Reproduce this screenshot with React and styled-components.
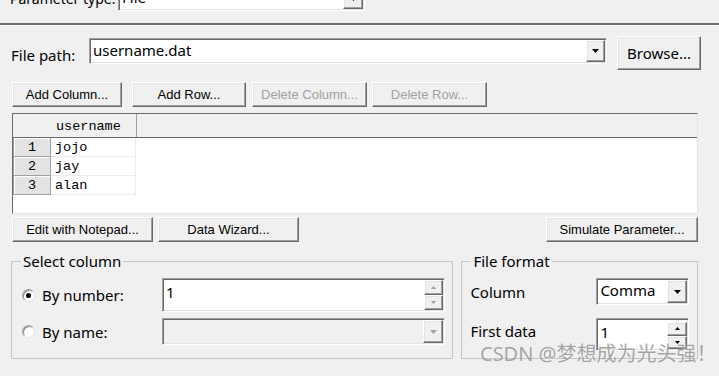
import React from 'react'
import styled, { createGlobalStyle, css } from 'styled-components'

const UI = `"Noto Sans", "Liberation Sans", sans-serif`
const SMALL = `"Liberation Sans", Arial, sans-serif`
const MONO = `"Liberation Mono", "DejaVu Sans Mono", monospace`

const GlobalStyle = createGlobalStyle`
  html, body {
    margin: 0;
    padding: 0;
    background: #f0f0f0;
  }
  body {
    font-family: ${UI};
    color: #000;
  }
`

const raised = css`
  box-sizing: border-box;
  background: #f0f0f0;
  border: 1px solid;
  border-color: #fff #696969 #696969 #fff;
  box-shadow: inset -1px -1px #a0a0a0, inset 1px 1px #e3e3e3;
`

const sunken = css`
  box-sizing: border-box;
  border: 1px solid;
  border-color: #a0a0a0 #fff #fff #a0a0a0;
  box-shadow: inset 1px 1px #696969, inset -1px -1px #e3e3e3;
`

const Page = styled.div`
  position: relative;
  width: 719px;
  height: 376px;
  overflow: hidden;
  background: #f0f0f0;
`

const TopStrip = styled.div`
  height: 22px;
  overflow: hidden;
`

const TopRow = styled.div`
  display: flex;
  align-items: center;
  height: 25px;
  margin-top: -14px;
  padding-left: 10px;
`

const Separator = styled.div`
  height: 2px;
  background: #6f6f6f;
  border-top: 1px solid #f0f0f0;
  border-bottom: 1px solid #fff;
`

const Body = styled.div`
  padding: 10px 21px 0 12px;
`

const Row = styled.div`
  display: flex;
  align-items: ${(p) => p.$align || 'center'};
  margin-top: ${(p) => p.$mt || 0}px;
`

const Label = styled.span`
  flex-shrink: 0;
  width: ${(p) => (p.$w ? `${p.$w}px` : 'auto')};
  margin-top: ${(p) => p.$mt || 0}px;
  margin-bottom: ${(p) => p.$mb || 0}px;
  font-family: ${UI};
  font-size: ${(p) => p.$size || 15}px;
  line-height: 20px;
  white-space: nowrap;
`

const Button = styled.button`
  ${raised};
  flex-shrink: 0;
  width: ${(p) => p.$w}px;
  height: ${(p) => p.$h || 25}px;
  margin: 0 0 0 ${(p) => p.$ml || 0}px;
  padding: 0;
  font-family: ${(p) => (p.$big ? UI : SMALL)};
  font-size: ${(p) => (p.$big ? 15 : 13)}px;
  color: ${(p) => (p.disabled ? '#a0a0a0' : '#000')};
  outline: none;
  appearance: none;
`

const Combo = styled.div`
  ${sunken};
  display: flex;
  flex-shrink: 0;
  width: ${(p) => p.$w}px;
  height: ${(p) => p.$h}px;
  margin-top: ${(p) => p.$mt || 0}px;
  padding: 1px;
  background: ${(p) => (p.$disabled ? '#f0f0f0' : '#fff')};
`

const ComboText = styled.span`
  flex: 1;
  padding: ${(p) => p.$pt || 0}px 0 0 2px;
  font-family: ${UI};
  font-size: 15px;
  line-height: 19px;
  overflow: hidden;
  white-space: nowrap;
`

const DropButton = styled.div`
  ${raised};
  width: ${(p) => p.$w || 19}px;
  display: flex;
  align-items: center;
  justify-content: center;
`

const SpinButtons = styled.div`
  display: flex;
  flex-direction: column;
  width: ${(p) => p.$w || 19}px;
  margin-top: ${(p) => p.$mt || 0}px;
`

const SpinButton = styled.div`
  ${raised};
  flex: 1;
  display: flex;
  align-items: center;
  justify-content: center;
`

const Grid = styled.div`
  box-sizing: border-box;
  height: 101px;
  margin-top: 6px;
  background: #fff;
  border: 1px solid;
  border-color: #696969 #e3e3e3 #e3e3e3 #696969;
`

const HeadRow = styled.div`
  display: flex;
  height: 23px;
  background: #f0f0f0;
  border-bottom: 1px solid #696969;
`

const HeadCell = styled.div`
  box-sizing: border-box;
  width: ${(p) => p.$w}px;
  padding-left: 5px;
  font-family: ${MONO};
  font-size: 13.5px;
  line-height: 25px;
  border-right: ${(p) => (p.$sep ? '1px solid #a0a0a0' : 'none')};
`

const DataRow = styled.div`
  display: flex;
  height: 19px;
`

const RowNumber = styled.div`
  box-sizing: border-box;
  width: 38px;
  background: #e3e3e3;
  border: 1px solid #a0a0a0;
  border-top: none;
  box-shadow: inset 1px 1px #fff;
  text-align: center;
  font-family: ${MONO};
  font-size: 13.5px;
  line-height: 19px;
`

const Cell = styled.div`
  box-sizing: border-box;
  width: 85px;
  padding-left: 4px;
  border-right: 1px solid #ececec;
  border-bottom: 1px solid #ececec;
  font-family: ${MONO};
  font-size: 13.5px;
  line-height: 19px;
`

const Groups = styled.div`
  display: flex;
  gap: 8px;
  margin: 9px 0 0 -1px;
`

const Group = styled.fieldset`
  box-sizing: border-box;
  width: ${(p) => p.$w}px;
  min-width: 0;
  margin: 0;
  padding: 7px 0 ${(p) => p.$pb || 10}px ${(p) => p.$pl}px;
  border: 1px solid #c6c6c6;
`

const Legend = styled.legend`
  margin-left: ${(p) => p.$ml || 0}px;
  padding: 0 2px;
  font-family: ${UI};
  font-size: 15px;
  line-height: 20px;
`

const FormGrid = styled.div`
  display: grid;
  grid-template-columns: ${(p) => p.$col}px auto;
  row-gap: ${(p) => p.$gap}px;
  align-items: center;
`

const RadioLabel = styled.label`
  display: flex;
  align-items: center;
  gap: 7px;
`

const Radio = styled.span`
  position: relative;
  box-sizing: border-box;
  width: 13px;
  height: 13px;
  border-radius: 50%;
  background: #fff;
  border: 1px solid;
  border-color: #a0a0a0 #e3e3e3 #e3e3e3 #a0a0a0;
  box-shadow: inset 1px 1px 0 #8a8a8a;

  &::after {
    content: '';
    display: ${(p) => (p.$checked ? 'block' : 'none')};
    position: absolute;
    left: 3px;
    top: 3px;
    width: 5px;
    height: 5px;
    border-radius: 50%;
    background: #000;
  }
`

const Watermark = styled.div`
  position: absolute;
  left: 480px;
  top: 342px;
  font-family: "Noto Sans", "Noto Sans CJK SC", sans-serif;
  font-size: 20px;
  line-height: 24px;
  color: rgba(105, 105, 105, 0.6);
  text-shadow: 0 0 1px rgba(255, 255, 255, 0.8);
  white-space: nowrap;
  pointer-events: none;
`

const Arrow = ({ dir = 'down', small, disabled }) => {
  const w = small ? 5 : 7
  const h = small ? 3 : 4
  const pts = dir === 'down' ? `0,0 ${w},0 ${w / 2},${h}` : `0,${h} ${w},${h} ${w / 2},0`
  return (
    <svg width={w} height={h} viewBox={`0 0 ${w} ${h}`}>
      <polygon points={pts} fill={disabled ? '#a0a0a0' : '#000'} />
    </svg>
  )
}

const rows = ['jojo', 'jay', 'alan']

export default function App() {
  return (
    <Page>
      <GlobalStyle />
      <TopStrip>
        <TopRow>
          <Label $w={108} $size={14}>Parameter type:</Label>
          <Combo $w={247} $h={25}>
            <ComboText>File</ComboText>
            <DropButton $w={20}>
              <Arrow />
            </DropButton>
          </Combo>
        </TopRow>
      </TopStrip>
      <Separator />

      <Body>
        <Row $align="flex-start">
          <Label $w={78} $mt={9} style={{ marginLeft: -1 }}>File path:</Label>
          <Combo $w={518} $h={26} $mt={2}>
            <ComboText $pt={1}>username.dat</ComboText>
            <DropButton>
              <Arrow />
            </DropButton>
          </Combo>
          <Button $w={84} $h={34} $ml={10} $big>Browse...</Button>
        </Row>

        <Row $mt={12}>
          <Button $w={110}>Add Column...</Button>
          <Button $w={114} $ml={10}>Add Row...</Button>
          <Button $w={115} $ml={6} disabled>Delete Column...</Button>
          <Button $w={115} $ml={5} disabled>Delete Row...</Button>
        </Row>

        <Grid>
          <HeadRow>
            <HeadCell $w={38} />
            <HeadCell $w={86} $sep>username</HeadCell>
          </HeadRow>
          {rows.map((name, i) => (
            <DataRow key={name}>
              <RowNumber>{i + 1}</RowNumber>
              <Cell>{name}</Cell>
            </DataRow>
          ))}
        </Grid>

        <Row $mt={3}>
          <Button $w={141}>Edit with Notepad...</Button>
          <Button $w={141} $ml={5}>Data Wizard...</Button>
          <Button $w={152} style={{ marginLeft: 'auto' }}>Simulate Parameter...</Button>
        </Row>

        <Groups>
          <Group $w={445} $pl={10} $pb={13}>
            <Legend $ml={-1}>Select column</Legend>
            <FormGrid $col={140} $gap={6}>
              <RadioLabel>
                <Radio $checked />
                <Label>By number:</Label>
              </RadioLabel>
              <Combo $w={283} $h={34}>
                <ComboText $pt={3}>1</ComboText>
                <SpinButtons>
                  <SpinButton><Arrow dir="up" small disabled /></SpinButton>
                  <SpinButton><Arrow small disabled /></SpinButton>
                </SpinButtons>
              </Combo>
              <RadioLabel>
                <Radio />
                <Label>By name:</Label>
              </RadioLabel>
              <Combo $w={283} $h={27} $disabled>
                <ComboText />
                <DropButton $w={20}>
                  <Arrow disabled />
                </DropButton>
              </Combo>
            </FormGrid>
          </Group>

          <Group $w={238} $pl={8} $pb={7}>
            <Legend $ml={1}>File format</Legend>
            <FormGrid $col={126} $gap={13}>
              <Label>Column</Label>
              <Combo $w={93} $h={27}>
                <ComboText $pt={1}>Comma</ComboText>
                <DropButton $w={20}>
                  <Arrow />
                </DropButton>
              </Combo>
              <Label $mb={7}>First data</Label>
              <Combo $w={93} $h={33}>
                <ComboText $pt={3}>1</ComboText>
                <SpinButtons $w={20} $mt={2}>
                  <SpinButton><Arrow dir="up" small /></SpinButton>
                  <SpinButton><Arrow small /></SpinButton>
                </SpinButtons>
              </Combo>
            </FormGrid>
          </Group>
        </Groups>
      </Body>

      <Watermark>CSDN @梦想成为光头强！</Watermark>
    </Page>
  )
}
